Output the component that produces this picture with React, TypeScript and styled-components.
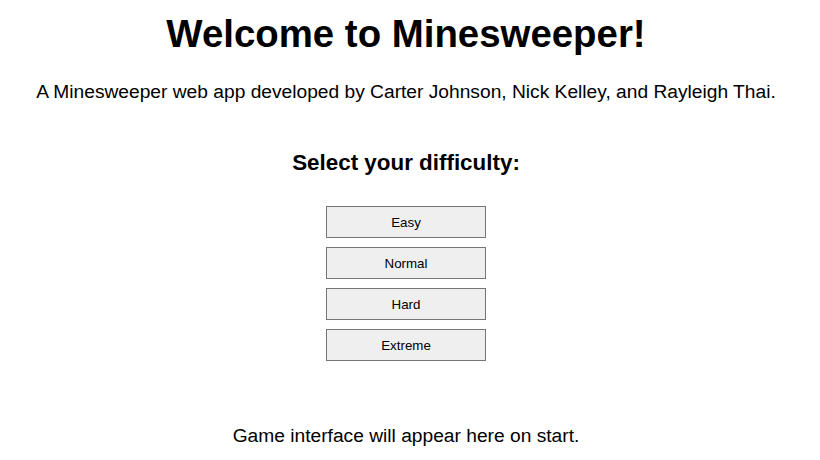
import React from "react";
import styled, { createGlobalStyle } from "styled-components";

const Global = createGlobalStyle`
  html, body { margin: 0; padding: 0; background: #ffffff; }
  body { font-family: "Liberation Sans", Arial, sans-serif; color: #000; }
`;

const Page = styled.main`
  display: flex;
  flex-direction: column;
  align-items: center;
  padding: 12px 8px 0 0;
  text-align: center;
`;

const Title = styled.h1`
  margin: 0;
  font-size: 38.4px;
  font-weight: bold;
  line-height: 44px;
`;

const Subtitle = styled.p`
  margin: 25px 0 0;
  font-size: 19.2px;
  line-height: 22px;
`;

const Heading = styled.h2`
  margin: 47px 0 0;
  font-size: 22.4px;
  font-weight: bold;
  line-height: 26px;
`;

const ButtonList = styled.div`
  display: flex;
  flex-direction: column;
  gap: 9px;
  margin-top: 30px;
`;

const DifficultyButton = styled.button`
  width: 160px;
  height: 32px;
  box-sizing: border-box;
  background: #efefef;
  border: 1px solid #767676;
  border-radius: 0;
  font-family: "Liberation Sans", Arial, sans-serif;
  font-size: 13.33px;
  color: #000;
  padding: 0;
  cursor: pointer;
`;

const Status = styled.p`
  margin: 64px 0 0;
  font-size: 19.2px;
  line-height: 22px;
`;

const levels = ["Easy", "Normal", "Hard", "Extreme"];

export default function App() {
  return (
    <>
      <Global />
      <Page>
        <Title>Welcome to Minesweeper!</Title>
        <Subtitle>
          A Minesweeper web app developed by Carter Johnson, Nick Kelley, and Rayleigh Thai.
        </Subtitle>
        <Heading>Select your difficulty:</Heading>
        <ButtonList>
          {levels.map((l) => (
            <DifficultyButton key={l}>{l}</DifficultyButton>
          ))}
        </ButtonList>
        <Status>Game interface will appear here on start.</Status>
      </Page>
    </>
  );
}
